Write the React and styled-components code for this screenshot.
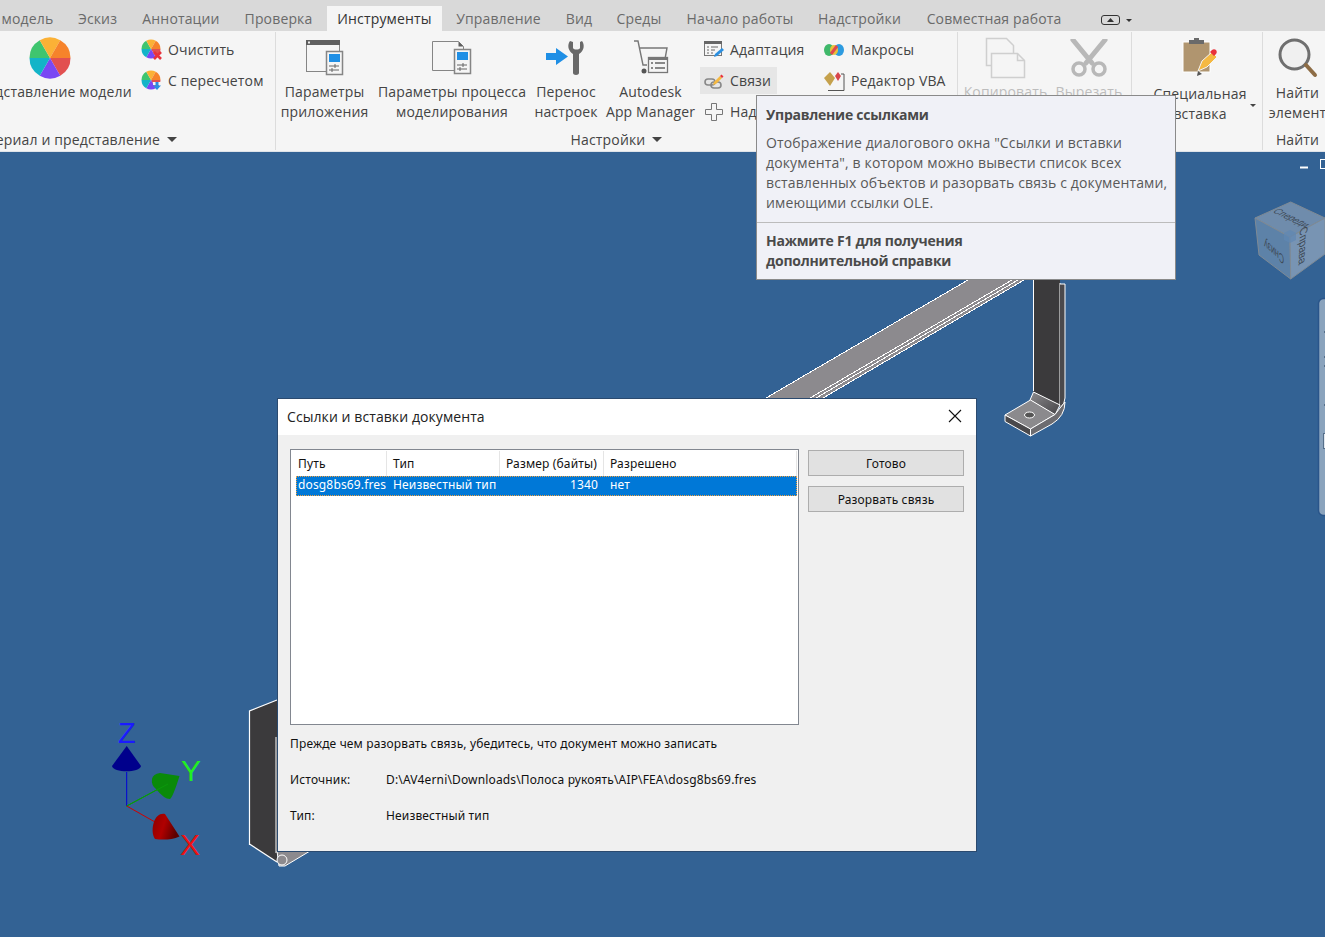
import React from "react";
import styled, { createGlobalStyle } from "styled-components";

const Global = createGlobalStyle`
  html, body { margin: 0; padding: 0; background: #336294; }
`;

const Page = styled.div`
  position: relative;
  display: flex;
  flex-direction: column;
  width: 1325px;
  height: 937px;
  overflow: hidden;
  font-family: "Open Sans", "Noto Sans", sans-serif;
`;

const TabBar = styled.div`
  display: flex;
  align-items: flex-end;
  height: 31px;
  background: #d9d9d9;
  flex: none;
`;

const Tab = styled.div`
  flex: none;
  box-sizing: border-box;
  width: ${(p) => p.$w}px;
  height: 25px;
  padding-right: ${(p) => p.$pr || 0}px;
  line-height: 25px;
  text-align: center;
  font-size: 14px;
  letter-spacing: 0.15px;
  white-space: nowrap;
  color: ${(p) => (p.$active ? "#333" : "#6a6a6a")};
  background: ${(p) => (p.$active ? "#f5f5f5" : "transparent")};
`;

const TabToggle = styled.svg`
  flex: none;
  margin: 0 0 6px 27px;
`;

const Ribbon = styled.div`
  display: flex;
  height: 120px;
  flex: none;
  background: #f5f5f5;
  border-bottom: 1px solid #dfe3e8;
`;

const Panel = styled.div`
  flex: none;
  display: flex;
  flex-direction: column;
  box-sizing: border-box;
  width: ${(p) => p.$w}px;
  margin-left: ${(p) => p.$ml || 0}px;
  border-right: ${(p) => (p.$last ? "none" : "1px solid #dcdcdc")};
  margin-top: 1px;
  margin-bottom: 1px;
`;

const PanelBody = styled.div`
  flex: 1;
  display: flex;
  min-height: 0;
`;

const PanelLabel = styled.div`
  flex: none;
  display: flex;
  align-items: center;
  justify-content: ${(p) => p.$align || "center"};
  gap: 7px;
  height: 22px;
  padding-right: ${(p) => p.$pr || 0}px;
  font-size: 14px;
  letter-spacing: 0.15px;
  color: #444;
  white-space: nowrap;
`;

const Caret = styled.span`
  width: 0;
  height: 0;
  border-left: 5px solid transparent;
  border-right: 5px solid transparent;
  border-top: 5px solid #444;
`;

const MiniCaret = styled.span`
  flex: none;
  width: 0;
  height: 0;
  margin: 72px 0 0 -3px;
  border-left: 3px solid transparent;
  border-right: 3px solid transparent;
  border-top: 3px solid #444;
`;

const LargeButton = styled.div`
  flex: none;
  display: flex;
  flex-direction: column;
  align-items: center;
  width: ${(p) => p.$w}px;
  margin-left: ${(p) => p.$ml || 0}px;
  padding-top: 3px;
  font-size: 14px;
  line-height: 20px;
  letter-spacing: 0.15px;
  color: ${(p) => (p.$disabled ? "#bdbdbd" : "#444")};
  white-space: nowrap;
  text-align: center;
`;

const LargeIcon = styled.div`
  height: 45px;
  margin-bottom: ${(p) => p.$mb ?? 2}px;
  display: flex;
  align-items: center;
  justify-content: center;
`;

const SmallColumn = styled.div`
  flex: none;
  display: grid;
  grid-auto-rows: 31px;
  align-items: center;
  justify-items: start;
  width: ${(p) => p.$w}px;
  padding-top: 2px;
`;

const SmallButton = styled.div`
  display: flex;
  align-items: center;
  gap: ${(p) => p.$gap || 6}px;
  height: 27px;
  padding: 0 6px 0 ${(p) => p.$pl ?? 4}px;
  font-size: 14px;
  letter-spacing: 0.15px;
  color: #444;
  white-space: nowrap;
  background: ${(p) => (p.$hover ? "#e6e6e6" : "transparent")};
`;

const Viewport = styled.div`
  position: relative;
  flex: 1;
  background: #336294;
`;

const Scene = styled.svg`
  position: absolute;
  inset: 0;
`;

const Tooltip = styled.div`
  position: absolute;
  left: 756px;
  top: 95px;
  box-sizing: border-box;
  width: 420px;
  height: 185px;
  background: #f0f1f7;
  border: 1px solid #8a8a8a;
  font-size: 14px;
  line-height: 20px;
  letter-spacing: 0.14px;
  color: #595959;
  white-space: nowrap;
`;

const TipSection = styled.div`
  padding: ${(p) => p.$pt}px 9px 0;
`;

const TipTitle = styled.div`
  font-weight: 700;
  letter-spacing: -0.25px;
  color: #4a4a4a;
  margin-bottom: 8px;
`;

const TipDivider = styled.div`
  height: 1px;
  background: #bcbcbc;
  margin-top: 9px;
`;

const TipHelp = styled.div`
  font-weight: 700;
  letter-spacing: -0.25px;
  color: #4a4a4a;
`;

const Dialog = styled.div`
  position: absolute;
  left: 277px;
  top: 398px;
  box-sizing: border-box;
  width: 700px;
  height: 454px;
  background: #f0f0f0;
  border: 1px solid #2b4a6f;
  display: flex;
  flex-direction: column;
  font-family: "Noto Sans", Tahoma, sans-serif;
  font-size: 12px;
  letter-spacing: 0.15px;
  color: #111;
`;

const DialogTitle = styled.div`
  flex: none;
  display: flex;
  align-items: center;
  justify-content: space-between;
  box-sizing: border-box;
  height: 36px;
  padding: 0 14px 2px 9px;
  background: #fff;
  font-family: "Open Sans", sans-serif;
  font-size: 14px;
  letter-spacing: 0.08px;
  color: #222;
`;

const DialogBody = styled.div`
  flex: 1;
  padding: 14px 12px 0;
`;

const TopRow = styled.div`
  display: flex;
  gap: 9px;
`;

const List = styled.div`
  flex: none;
  box-sizing: border-box;
  width: 509px;
  height: 276px;
  background: #fff;
  border: 1px solid #828790;
  padding-top: 1px;
`;

const ListHeader = styled.div`
  display: flex;
  height: 25px;
`;

const HeaderCell = styled.div`
  flex: none;
  box-sizing: border-box;
  width: ${(p) => p.$w}px;
  height: 25px;
  line-height: 25px;
  padding-left: ${(p) => p.$pl}px;
  border-right: 1px solid #e5e5e5;
  white-space: nowrap;
`;

const ListRow = styled.div`
  display: flex;
  align-items: flex-start;
  box-sizing: border-box;
  width: 501px;
  height: 20px;
  line-height: 18px;
  margin-left: 5px;
  background: #0078d7;
  outline: 1px dotted #f0a040;
  outline-offset: -1px;
  color: #fff;
`;

const RowCell = styled.div`
  flex: none;
  box-sizing: border-box;
  width: ${(p) => p.$w}px;
  padding: 0 ${(p) => p.$pr || 0}px 0 ${(p) => p.$pl || 0}px;
  text-align: ${(p) => p.$align || "left"};
  white-space: nowrap;
  overflow: hidden;
`;

const ButtonColumn = styled.div`
  flex: none;
  display: flex;
  flex-direction: column;
  gap: 10px;
  width: 156px;
  padding-top: 1px;
`;

const DialogButton = styled.div`
  box-sizing: border-box;
  height: 26px;
  line-height: 25px;
  text-align: center;
  background: #e1e1e1;
  border: 1px solid #adadad;
`;

const Notes = styled.div`
  display: grid;
  grid-auto-rows: 36px;
  padding-top: 10px;
`;

const NoteRow = styled.div`
  display: flex;
  line-height: 18px;
  white-space: nowrap;
`;

const NoteLabel = styled.div`
  flex: none;
  width: 96px;
`;

const sector = (cx, cy, r, a0, a1) => {
  const rad = (d) => (d * Math.PI) / 180;
  const x0 = cx + r * Math.cos(rad(a0));
  const y0 = cy + r * Math.sin(rad(a0));
  const x1 = cx + r * Math.cos(rad(a1));
  const y1 = cy + r * Math.sin(rad(a1));
  return `M${cx} ${cy}L${x0} ${y0}A${r} ${r} 0 0 1 ${x1} ${y1}Z`;
};

const WHEEL = ["#e25050", "#7a48f4", "#13b4c8", "#3fc56f", "#fbb136", "#f6832b"];

const Wheel = ({ cx, cy, r }) => (
  <>
    {WHEEL.map((c, i) => (
      <path key={c} d={sector(cx, cy, r, i * 60, i * 60 + 60)} fill={c} />
    ))}
  </>
);

const ColorWheelIcon = () => (
  <svg width="42" height="42" viewBox="0 0 42 42">
    <Wheel cx={21} cy={21} r={20.5} />
  </svg>
);

const ClearIcon = () => (
  <svg width="22" height="22" viewBox="0 0 22 22">
    <Wheel cx={10} cy={10} r={9.5} />
    <path d="M13 13l7 7M20 13l-7 7" stroke="#e8323c" strokeWidth="2.6" />
  </svg>
);

const RecalcIcon = () => (
  <svg width="22" height="22" viewBox="0 0 22 22">
    <Wheel cx={10} cy={10} r={9.5} />
    <rect x="12" y="12" width="8" height="3" fill="#f5f5f5" />
    <path d="M14.5 12h3v3.5h2.5l-4 4.5-4-4.5h2.5z" fill="#2b8fe0" />
  </svg>
);

const SliderBits = ({ x, y }) => (
  <g stroke="#666" strokeWidth="1" fill="none">
    <path d={`M${x} ${y}h10M${x} ${y + 4}h10`} />
    <path d={`M${x + 6} ${y - 2}v4M${x + 3} ${y + 2}v4`} />
  </g>
);

const AppParamsIcon = () => (
  <svg width="38" height="36" viewBox="0 0 38 36">
    <rect x="0.5" y="0.5" width="33" height="31" fill="#f5f5f5" stroke="#858585" />
    <rect x="0" y="0" width="34" height="5" fill="#5f5f5f" />
    <rect x="2" y="1.5" width="2" height="2" fill="#eee" />
    <rect x="20.5" y="11.5" width="16" height="23" fill="#f5f5f5" stroke="#858585" strokeWidth="1.5" />
    <rect x="23" y="14" width="11" height="8" fill="#1f8fe5" />
    <SliderBits x={23} y={26} />
  </svg>
);

const ProcessParamsIcon = () => (
  <svg width="40" height="36" viewBox="0 0 40 36">
    <path d="M.5 1.5h26l5 5v24H.5z" fill="#f5f5f5" stroke="#858585" />
    <path d="M26.5 1.5v5h5z" fill="#5f5f5f" />
    <rect x="22.5" y="9.5" width="16" height="24" fill="#f5f5f5" stroke="#858585" strokeWidth="1.5" />
    <rect x="25" y="12" width="11" height="8" fill="#1f8fe5" />
    <SliderBits x={25} y={25} />
  </svg>
);

const TransferIcon = () => (
  <svg width="42" height="36" viewBox="0 0 42 36">
    <path d="M1 13h10V8l12 8.500-12 8.500v-5H1z" fill="#1f8fe5" />
    <path d="M25 1c-3 4-2 10 3 13v19c0 2.500 6 2.500 6 0V14c5-3 6-9 3-13l-2 1v6c-1 2-6 2-7 0V2z" fill="#696969" />
  </svg>
);

const CartIcon = () => (
  <svg width="36" height="36" viewBox="0 0 36 36">
    <path d="M1 1h4l5 24h4M7 8h27l-2 11" fill="none" stroke="#777" strokeWidth="1.4" />
    <circle cx="11" cy="31" r="2.500" fill="#555" />
    <rect x="15.500" y="17.500" width="19" height="15" fill="#f5f5f5" stroke="#777" strokeWidth="1.3" />
    <rect x="15" y="17" width="20" height="3" fill="#777" />
    <path d="M18 23h2M22 23h10M18 28h2M22 28h10" stroke="#666" strokeWidth="1.300" />
  </svg>
);

const AdaptIcon = () => (
  <svg width="20" height="20" viewBox="0 0 20 20">
    <rect x="0.500" y="1.500" width="17" height="14" fill="#f5f5f5" stroke="#777" />
    <rect x="0" y="1" width="18" height="3" fill="#666" />
    <path d="M3 7h2M7 7h7M3 10h2M7 10h4M3 13h2M7 13h2" stroke="#666" />
    <path d="M10 17l1-3 7-6 2 2-7 6z" fill="#2b8fe0" />
  </svg>
);

const LinksIcon = () => (
  <svg width="20" height="18" viewBox="0 0 20 18">
    <rect x="1" y="7" width="10" height="6" rx="3" fill="none" stroke="#888" strokeWidth="1.6" />
    <rect x="7" y="10" width="10" height="6" rx="3" fill="none" stroke="#888" strokeWidth="1.6" />
    <path d="M10 10l6-6 2 2-6 6-3 1z" fill="#f5b942" />
    <path d="M16 4l1.500-1.500 2 2L18 6z" fill="#e8323c" />
  </svg>
);

const PlusIcon = () => (
  <svg width="20" height="20" viewBox="0 0 20 20">
    <path d="M7.500 1.500h5v6h6v5h-6v6h-5v-6h-6v-5h6z" fill="none" stroke="#777" />
  </svg>
);

const MacroIcon = () => (
  <svg width="20" height="14" viewBox="0 0 20 14">
    <ellipse cx="5" cy="7" rx="5" ry="6" fill="#3fb86a" />
    <ellipse cx="15" cy="7" rx="5" ry="6" fill="#2d9be0" />
    <ellipse cx="10" cy="7" rx="4" ry="5" fill="#e8c23a" />
    <path d="M7 11l6-8" stroke="#e0484f" strokeWidth="3" />
  </svg>
);

const VbaIcon = () => (
  <svg width="21" height="20" viewBox="0 0 21 20">
    <path d="M4 19.500h16V3h-3" fill="none" stroke="#555" />
    <path d="M6 1l5 6-5 8-6-8z" fill="#c5a14c" />
    <path d="M14 1l3 4-3 5-3-5z" fill="#d8464c" />
  </svg>
);

const CopyIcon = () => (
  <svg width="42" height="42" viewBox="0 0 42 42">
    <path d="M1.500 1.500h20l7 7v20h-27z" fill="#f5f5f5" stroke="#cfcfcf" strokeWidth="1.500" />
    <path d="M6.500 16.500h26l7 7v17h-33z" fill="#f5f5f5" stroke="#cfcfcf" strokeWidth="1.500" />
    <path d="M32.500 16.500v7h7" fill="none" stroke="#cfcfcf" strokeWidth="1.500" />
  </svg>
);

const ScissorsIcon = () => (
  <svg width="38" height="38" viewBox="0 0 38 38">
    <path d="M3 1l19 23M35 1L16 24" stroke="#b8b8b8" strokeWidth="5" strokeLinecap="round" />
    <circle cx="9" cy="30" r="6" fill="none" stroke="#b8b8b8" strokeWidth="3.500" />
    <circle cx="29" cy="30" r="6" fill="none" stroke="#b8b8b8" strokeWidth="3.500" />
  </svg>
);

const PasteIcon = () => (
  <svg width="36" height="40" viewBox="0 0 36 40">
    <rect x="1" y="4" width="27" height="30" fill="#b0956f" stroke="#fff" />
    <rect x="7" y="2" width="15" height="4" fill="#6a6a6a" />
    <rect x="12" y="0" width="5" height="3" fill="#6a6a6a" />
    <path d="M16 33l4-10 10-9 5 5-10 10z" fill="#f5b942" stroke="#f5f5f5" />
    <path d="M28 14l2-2c1-1 3-1 4 0s1 3 0 4l-2 2z" fill="#e8323c" />
    <path d="M15 38l1-5 4 3z" fill="#555" />
  </svg>
);

const FindIcon = () => (
  <svg width="40" height="40" viewBox="0 0 40 40">
    <circle cx="16.500" cy="16.500" r="14.500" fill="#f0f0f0" stroke="#6f6f6f" strokeWidth="3" />
    <path d="M28 27l9 10" stroke="#8d6c45" strokeWidth="4" strokeLinecap="round" />
  </svg>
);

const CloseIcon = () => (
  <svg width="14" height="14" viewBox="0 0 14 14">
    <path d="M1 1l12 12M13 1L1 13" stroke="#111" strokeWidth="1.100" />
  </svg>
);

const Model = () => (
  <Scene width="1325" height="785" viewBox="0 152 1325 785">
    <defs>
      <linearGradient id="bend" x1="0" y1="0" x2="1" y2="1">
        <stop offset="0" stopColor="#8b8a8d" />
        <stop offset="1" stopColor="#444346" />
      </linearGradient>
      <linearGradient id="redCone" x1="0" y1="0" x2="1" y2="0.300">
        <stop offset="0" stopColor="#8c0000" />
        <stop offset="0.500" stopColor="#b00000" />
        <stop offset="1" stopColor="#5c0000" />
      </linearGradient>
    </defs>

    <path d="M766 398L968 280H1024L823 398Z" fill="#8c8a8e" />
    <g stroke="#fff" strokeWidth="1" fill="none" shapeRendering="crispEdges">
      <path d="M766 398L968 280M810 398L1012 280M816 398L1018 280M823 398L1024 280" />
    </g>

    <path d="M1033.500 279H1060V405L1054 415L1033 392Z" fill="#3b3a3c" />
    <path d="M1060 283V404L1054 414" fill="none" stroke="#fff" />
    <path d="M1060 284H1065V398Q1065 404 1060 408" fill="#4a494c" stroke="#fff" />
    <path d="M1033.500 279V391" stroke="#fff" />
    <path d="M1033.500 392L1060 405L1055 415L1030 400Z" fill="url(#bend)" stroke="#fff" />
    <path d="M1005 415L1030.500 400L1055 414.500L1030.500 429Z" fill="#8b8a8d" stroke="#fff" />
    <path d="M1005 415V421.500L1030.500 436V429Z" fill="#4a494c" stroke="#fff" />
    <path d="M1030.500 436L1052 424Q1065 416 1065 402L1060 408L1055 414.500L1030.500 429Z" fill="#6d6c70" stroke="#fff" />
    <ellipse cx="1029.500" cy="415" rx="5" ry="3" fill="#555" stroke="#fff" />

    <path d="M249.500 711L277 700V862L249.500 844Z" fill="#3b3a3c" />
    <path d="M249.500 845V711L277 700" fill="none" stroke="#fff" strokeWidth="1.200" />
    <path d="M249.500 844L277 862" fill="none" stroke="#fff" strokeWidth="1.200" />
    <path d="M276 737V853" stroke="#fff" />
    <path d="M277 851H310L285 866H279Z" fill="#8c8a8e" stroke="#fff" />
    <circle cx="282" cy="860" r="5" fill="#8c8a8e" stroke="#fff" />

    <g>
      <path d="M126.700 806V772" stroke="#0000d8" strokeWidth="1" />
      <path d="M126.700 806L162 787" stroke="#00a000" strokeWidth="1" />
      <path d="M126.700 806L155 822" stroke="#d00000" strokeWidth="1" />
      <path d="M126.700 746L141 766C140 773 113 773 112 766Z" fill="#00008c" />
      <path d="M179.500 776L160 773Q153 774 152 779Q151 785 156 789Q164 799 170 799Q173 797 179.500 776Z" fill="#0a8a0a" />
      <path d="M126.700 806L168 784" stroke="#0a9a0a" strokeWidth="1" />
      <path d="M179.500 836.500L165 814C160 813 156 816 154 822C152 827 152 835 155 839C162 840 172 840 179.500 836.500Z" fill="url(#redCone)" />
      <text x="118" y="743" fontFamily="Liberation Sans" fontSize="29" fill="#1a1aff">Z</text>
      <text x="181" y="781" fontFamily="Liberation Sans" fontSize="30" fill="#22ee22">Y</text>
      <text x="180" y="855" fontFamily="Liberation Sans" fontSize="30" fill="#ee1111">X</text>
    </g>

    <path d="M1300 167.500h8" stroke="#fff" strokeWidth="2" />
    <rect x="1320.500" y="159.500" width="8" height="9" fill="none" stroke="#fff" />

    <path d="M1290.700 202L1325 218L1290 237L1255 218Z" fill="#6f8cac" stroke="#7f8a94" />
    <path d="M1255 218L1290 237L1290.700 279L1259 255Z" fill="#5d82a8" stroke="#7f8a94" />
    <path d="M1325 218L1290 237L1290.700 279L1325 254Z" fill="#7894b3" stroke="#7f8a94" />
    <path d="M1284 233l6-3 6 3v7l-6 3-6-3z" fill="#5f88b3" opacity="0.700" />
    <g fontFamily="Liberation Sans" fontSize="13" fill="#3e4a57">
      <text transform="matrix(0.62 0.3 -0.75 0.45 1272 212)">Спереди</text>
      <text transform="matrix(-0.55 -0.47 0 -1 1284 256)">Снизу</text>
      <text transform="matrix(-0.03 0.82 -0.85 0.45 1300 229)">Справа</text>
    </g>

    <rect x="1318.500" y="298.500" width="14" height="217" rx="5" fill="#8aa3bd" stroke="#2a558a" strokeWidth="1.500" />
    <path d="M1324 332h4M1324 357h4M1324 366h4M1324 405h4" stroke="#566f8a" strokeWidth="2" />
    <rect x="1323.500" y="433.500" width="8" height="15" fill="#dfe6ee" stroke="#566f8a" />
  </Scene>
);

export default function App() {
  return (
    <Page>
      <Global />
      <TabBar>
        <Tab $w={63} $pr={8}>модель</Tab>
        <Tab $w={69}>Эскиз</Tab>
        <Tab $w={98}>Аннотации</Tab>
        <Tab $w={97}>Проверка</Tab>
        <Tab $w={115} $active>Инструменты</Tab>
        <Tab $w={113}>Управление</Tab>
        <Tab $w={48}>Вид</Tab>
        <Tab $w={72}>Среды</Tab>
        <Tab $w={130}>Начало работы</Tab>
        <Tab $w={109}>Надстройки</Tab>
        <Tab $w={160}>Совместная работа</Tab>
        <TabToggle width="32" height="10" viewBox="0 0 32 10">
          <rect x="0.500" y="0.500" width="18" height="9" rx="2.500" fill="none" stroke="#333" />
          <path d="M6 7l3.500-4 3.500 4z" fill="#333" />
          <path d="M25 4h6l-3 3z" fill="#333" />
        </TabToggle>
      </TabBar>

      <Ribbon>
        <Panel $w={308} $ml={-32}>
          <PanelBody>
            <LargeButton $w={164}>
              <LargeIcon><ColorWheelIcon /></LargeIcon>
              Представление модели
            </LargeButton>
            <SmallColumn $w={140}>
              <SmallButton $gap={5} $pl={9}><ClearIcon />Очистить</SmallButton>
              <SmallButton $gap={5} $pl={9}><RecalcIcon />С пересчетом</SmallButton>
            </SmallColumn>
          </PanelBody>
          <PanelLabel $align="flex-end" $pr={98}>
            Материал и представление <Caret />
          </PanelLabel>
        </Panel>

        <Panel $w={682}>
          <PanelBody>
            <LargeButton $w={97}>
              <LargeIcon><AppParamsIcon /></LargeIcon>
              Параметры<br />приложения
            </LargeButton>
            <LargeButton $w={158}>
              <LargeIcon><ProcessParamsIcon /></LargeIcon>
              Параметры процесса<br />моделирования
            </LargeButton>
            <LargeButton $w={70}>
              <LargeIcon><TransferIcon /></LargeIcon>
              Перенос<br />настроек
            </LargeButton>
            <LargeButton $w={99}>
              <LargeIcon><CartIcon /></LargeIcon>
              Autodesk<br />App Manager
            </LargeButton>
            <SmallColumn $w={120}>
              <SmallButton><AdaptIcon />Адаптация</SmallButton>
              <SmallButton $hover><LinksIcon />Связи</SmallButton>
              <SmallButton><PlusIcon />Надстройки</SmallButton>
            </SmallColumn>
            <SmallColumn $w={130}>
              <SmallButton $gap={7}><MacroIcon />Макросы</SmallButton>
              <SmallButton $gap={6}><VbaIcon />Редактор VBA</SmallButton>
            </SmallColumn>
          </PanelBody>
          <PanelLabel>
            Настройки <Caret />
          </PanelLabel>
        </Panel>

        <Panel $w={174}>
          <PanelBody>
            <LargeButton $w={95} $disabled>
              <LargeIcon><CopyIcon /></LargeIcon>
              Копировать
            </LargeButton>
            <LargeButton $w={72} $disabled>
              <LargeIcon><ScissorsIcon /></LargeIcon>
              Вырезать
            </LargeButton>
          </PanelBody>
        </Panel>

        <Panel $w={131}>
          <PanelBody>
            <LargeButton $w={106} $ml={15}>
              <LargeIcon $mb={4}><PasteIcon /></LargeIcon>
              Специальная<br />вставка
            </LargeButton>
            <MiniCaret />
          </PanelBody>
        </Panel>

        <Panel $w={69} $last>
          <PanelBody>
            <LargeButton $w={69}>
              <LargeIcon $mb={3}><FindIcon /></LargeIcon>
              Найти<br />элемент
            </LargeButton>
          </PanelBody>
          <PanelLabel>Найти</PanelLabel>
        </Panel>
      </Ribbon>

      <Viewport>
        <Model />
      </Viewport>

      <Tooltip>
        <TipSection $pt={9}>
          <TipTitle>Управление ссылками</TipTitle>
          Отображение диалогового окна "Ссылки и вставки<br />
          документа", в котором можно вывести список всех<br />
          вставленных объектов и разорвать связь с документами,<br />
          имеющими ссылки OLE.
        </TipSection>
        <TipDivider />
        <TipSection $pt={8}>
          <TipHelp>Нажмите F1 для получения<br />дополнительной справки</TipHelp>
        </TipSection>
      </Tooltip>

      <Dialog>
        <DialogTitle>
          Ссылки и вставки документа
          <CloseIcon />
        </DialogTitle>
        <DialogBody>
          <TopRow>
            <List>
              <ListHeader>
                <HeaderCell $w={96} $pl={7}>Путь</HeaderCell>
                <HeaderCell $w={113} $pl={6}>Тип</HeaderCell>
                <HeaderCell $w={104} $pl={6}>Размер (байты)</HeaderCell>
                <HeaderCell $w={193} $pl={6}>Разрешено</HeaderCell>
              </ListHeader>
              <ListRow>
                <RowCell $w={91} $pl={2}>dosg8bs69.fres</RowCell>
                <RowCell $w={113} $pl={6}>Неизвестный тип</RowCell>
                <RowCell $w={104} $pr={6} $align="right">1340</RowCell>
                <RowCell $w={190} $pl={6}>нет</RowCell>
              </ListRow>
            </List>
            <ButtonColumn>
              <DialogButton>Готово</DialogButton>
              <DialogButton>Разорвать связь</DialogButton>
            </ButtonColumn>
          </TopRow>
          <Notes>
            <NoteRow>Прежде чем разорвать связь, убедитесь, что документ можно записать</NoteRow>
            <NoteRow>
              <NoteLabel>Источник:</NoteLabel>
              D:\AV4erni\Downloads\Полоса рукоять\AIP\FEA\dosg8bs69.fres
            </NoteRow>
            <NoteRow>
              <NoteLabel>Тип:</NoteLabel>
              Неизвестный тип
            </NoteRow>
          </Notes>
        </DialogBody>
      </Dialog>
    </Page>
  );
}
